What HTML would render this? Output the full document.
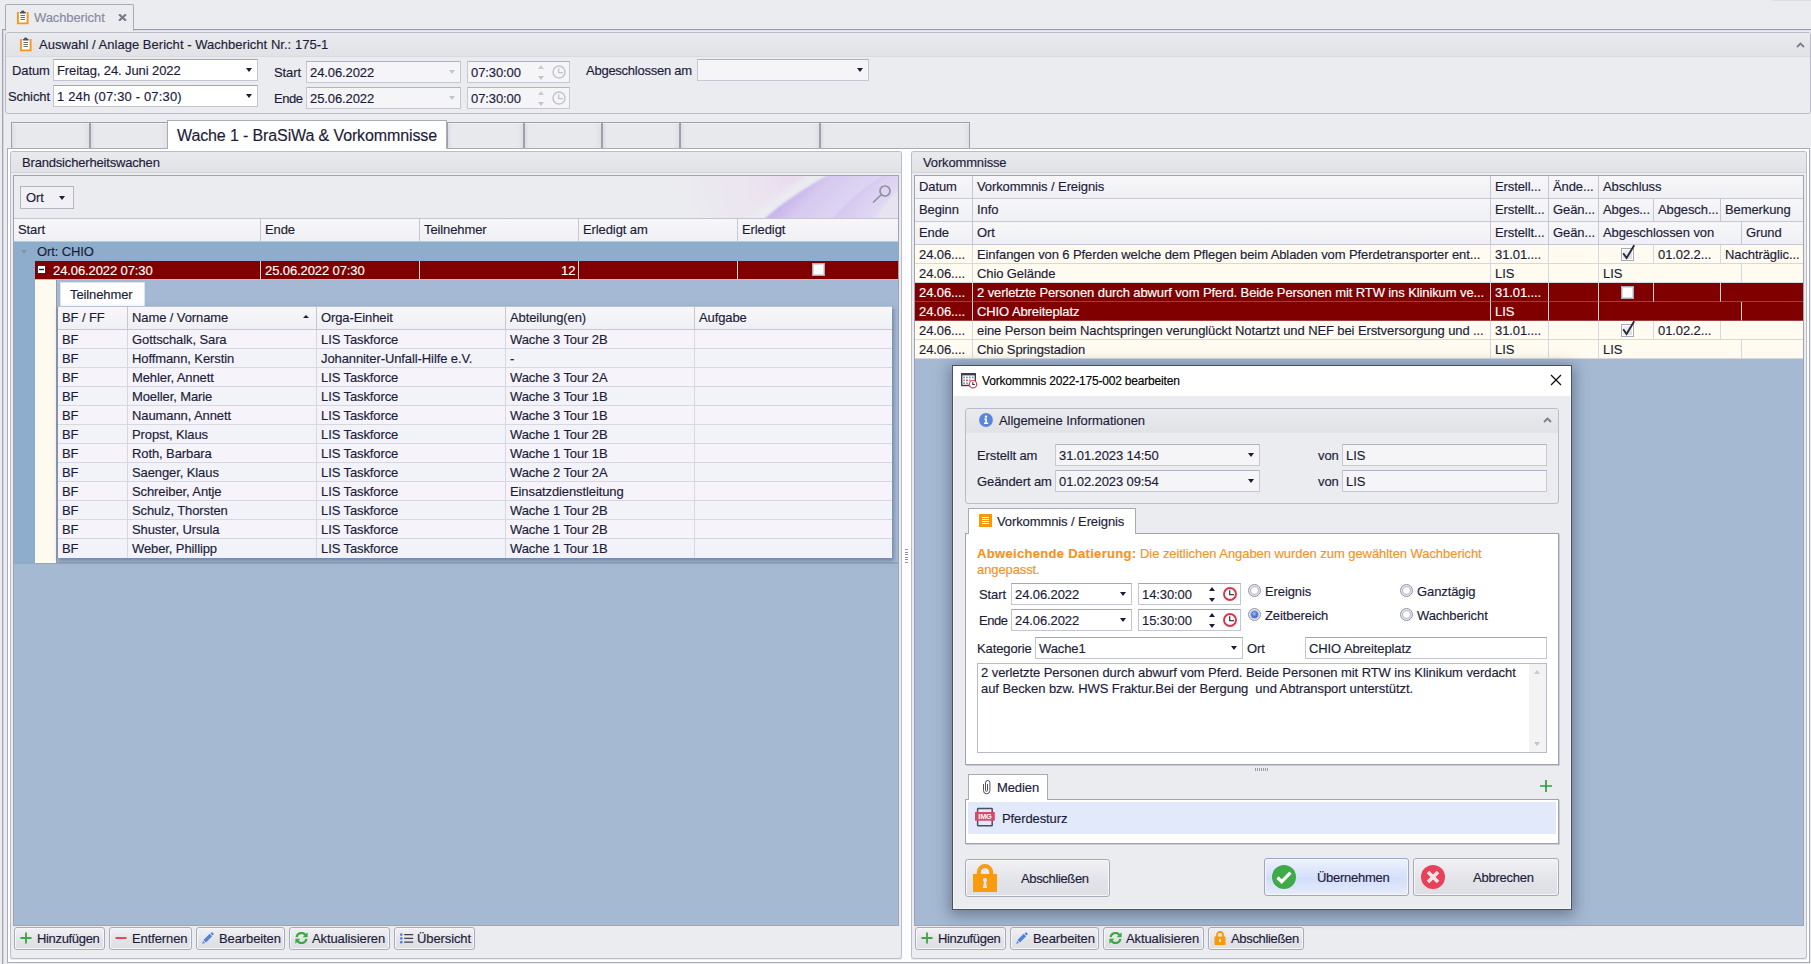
<!DOCTYPE html><html lang="de"><head><meta charset="utf-8"><title>Wachbericht</title><style>
*{box-sizing:border-box;margin:0;padding:0}
html,body{width:1811px;height:964px;overflow:hidden}
body{-webkit-text-stroke:0.15px;letter-spacing:-0.1px;background:#ebecf0;font-family:"Liberation Sans",sans-serif;font-size:13px;color:#1c1c38;position:relative;line-height:16px}
.a{position:absolute}
.t{position:absolute;white-space:nowrap;line-height:16px}
.inp{position:absolute;border:1px solid #c3c5d1;background:#fff;border-top-color:#a3a6b6}
.inp.dis{background:#f5f5f8;border-color:#c6c8d3;border-top-color:#b0b2c0}
.inp .v{position:absolute;left:3px;top:3px;white-space:nowrap}
.dd{position:absolute;width:0;height:0;border-left:3.5px solid transparent;border-right:3.5px solid transparent;border-top:4px solid #1c1c38}
.dd.g{border-top-color:#c3c4cc}
.up{position:absolute;width:0;height:0;border-left:3.5px solid transparent;border-right:3.5px solid transparent;border-bottom:4px solid #1c1c38}
.up.g{border-bottom-color:#c9cad2}
.gh{position:absolute;background:linear-gradient(#e9eaee,#e1e2e6);}
.gb{position:absolute;border:1px solid #babcc8;border-radius:3px}
.btn{position:absolute;border:1px solid #a9abb9;border-radius:3px;background:linear-gradient(#f1f1f5,#e2e3e8 60%,#dedfe5);box-shadow:inset 0 0 0 1px #f6f6f9}
.hc{position:absolute;background:linear-gradient(#f7f7f9,#eff0f4);border-right:1px solid #c6c7d2;border-bottom:1px solid #c6c7d2;white-space:nowrap;overflow:hidden}
.hc span{position:absolute;left:4px}
.c{position:absolute;white-space:nowrap;overflow:hidden;border-right:1px solid #d6d7e0;border-bottom:1px solid #d6d7e0;padding-left:4px;line-height:20px}
.sel .c, .c.sel{background:#800000;color:#fff;border-color:#e8e0e0 #c8b0b0}
</style></head><body>
<div class="a" style="left:2px;top:29px;width:1809px;height:1px;background:#9a9cab"></div>
<div class="a" style="left:2px;top:30px;width:1809px;height:1px;background:#dfe0e7"></div>
<div class="a" style="left:1772px;top:0px;width:39px;height:1px;background:#dcdde2"></div>
<div class="a" style="left:2px;top:30px;width:1px;height:934px;background:#a1a3b0"></div>
<div class="a" style="left:3px;top:31px;width:1px;height:933px;background:#d4d5dd"></div>
<div class="a" style="left:5px;top:4px;width:129px;height:27px;border:1px solid #a9abb8;border-bottom:none;background:#ebecf0;border-radius:2px 2px 0 0"></div>
<svg class="a" style="left:16px;top:10px" width="14" height="15" viewBox="0 0 14 15"><path d="M1.9 2V13.4H11.6V2" fill="#fff" stroke="#f7941d" stroke-width="1.9"/><path d="M3.8 3.4V1.9H4.9A1.9 1.7 0 0 1 8.6 1.9H9.7V3.4z" fill="#4a4e5a"/><path d="M4.5 5.5h4.5M4.5 7.5h4.5M4.5 9.5h4.5" stroke="#6b6f7c" stroke-width="1"/></svg>
<div class="t" style="left:34px;top:10px;color:#868ba2">Wachbericht</div>
<svg class="a" style="left:118px;top:14px" width="9" height="7" viewBox="0 0 9 7"><path d="M1 .3l7 6.4M8 .3l-7 6.4" stroke="#777a8a" stroke-width="2.2"/></svg>
<div class="gb" style="left:5px;top:32px;width:1806px;height:82px;"></div>
<div class="gh" style="left:6px;top:33px;width:1804px;height:24px;border-bottom:1px solid #d9dae0;border-radius:2px 2px 0 0"></div>
<svg class="a" style="left:19px;top:37px" width="14" height="15" viewBox="0 0 14 15"><path d="M1.9 2V13.4H11.6V2" fill="#fff" stroke="#f7941d" stroke-width="1.9"/><path d="M3.8 3.4V1.9H4.9A1.9 1.7 0 0 1 8.6 1.9H9.7V3.4z" fill="#4a4e5a"/><path d="M4.5 5.5h4.5M4.5 7.5h4.5M4.5 9.5h4.5" stroke="#6b6f7c" stroke-width="1"/></svg>
<div class="t" style="left:39px;top:37px;letter-spacing:0.03px">Auswahl / Anlage Bericht - Wachbericht Nr.: 175-1</div>
<svg class="a" style="left:1796px;top:42px" width="9" height="6" viewBox="0 0 9 6"><path d="M1 5l3.5-3.5L8 5" fill="none" stroke="#7a7d8c" stroke-width="1.8"/></svg>
<div class="t" style="left:12px;top:63px;">Datum</div>
<div class="inp" style="left:53px;top:59px;width:205px;height:22px"><span class="v">Freitag, 24. Juni 2022</span><i class="dd" style="right:5px;top:8px"></i></div>
<div class="t" style="left:8px;top:89px;">Schicht</div>
<div class="inp" style="left:53px;top:85px;width:205px;height:22px"><span class="v" style="letter-spacing:.16px">1 24h (07:30 - 07:30)</span><i class="dd" style="right:5px;top:8px"></i></div>
<div class="t" style="left:274px;top:65px;">Start</div>
<div class="inp dis" style="left:306px;top:61px;width:155px;height:22px"><span class="v">24.06.2022</span><i class="dd g" style="right:5px;top:8px"></i></div>
<div class="t" style="left:274px;top:91px;letter-spacing:-0.5px">Ende</div>
<div class="inp dis" style="left:306px;top:87px;width:155px;height:22px"><span class="v">25.06.2022</span><i class="dd g" style="right:5px;top:8px"></i></div>
<div class="inp dis" style="left:467px;top:61px;width:103px;height:22px"><span class="v">07:30:00</span></div>
<i class="up g" style="left:538px;top:65px"></i><i class="dd g" style="left:538px;top:76px"></i>
<svg class="a" style="left:552px;top:65px" width="14" height="14" viewBox="0 0 14 14"><circle cx="7" cy="7" r="6" fill="none" stroke="#c3c4cc" stroke-width="1.5"/><path d="M6.7 3.2V7.6H11" fill="none" stroke="#c3c4cc" stroke-width="1.3"/></svg>
<div class="inp dis" style="left:467px;top:87px;width:103px;height:22px"><span class="v">07:30:00</span></div>
<i class="up g" style="left:538px;top:91px"></i><i class="dd g" style="left:538px;top:102px"></i>
<svg class="a" style="left:552px;top:91px" width="14" height="14" viewBox="0 0 14 14"><circle cx="7" cy="7" r="6" fill="none" stroke="#c3c4cc" stroke-width="1.5"/><path d="M6.7 3.2V7.6H11" fill="none" stroke="#c3c4cc" stroke-width="1.3"/></svg>
<div class="t" style="left:586px;top:63px;letter-spacing:-0.25px">Abgeschlossen am</div>
<div class="inp dis" style="left:697px;top:59px;width:172px;height:22px"><span class="v"></span><i class="dd" style="right:5px;top:8px"></i></div>
<div class="a" style="left:7px;top:148px;width:1803px;height:1px;background:#a9abb8"></div>
<div class="a" style="left:8px;top:149px;width:1801px;height:2px;background:#fff"></div>
<div class="a" style="left:7px;top:148px;width:1px;height:814px;background:#a9abb8"></div>
<div class="a" style="left:8px;top:149px;width:2px;height:812px;background:#fff"></div>
<div class="a" style="left:1809px;top:148px;width:1px;height:815px;background:#a9abb8"></div>
<div class="a" style="left:1807px;top:149px;width:2px;height:812px;background:#fff"></div>
<div class="a" style="left:7px;top:962px;width:1803px;height:1px;background:#a9abb8"></div>
<div class="a" style="left:8px;top:960px;width:1801px;height:2px;background:#fff"></div>
<div class="a" style="left:11px;top:122px;width:79px;height:26px;border:1px solid #9d9fae;border-bottom:none;background:linear-gradient(90deg,#dcdde3 0,#e8e9ed 4px,#e8e9ed calc(100% - 6px),#dfe0e6 100%);box-shadow:inset 0 1px 0 #f1f1f5"></div>
<div class="a" style="left:90px;top:122px;width:79px;height:26px;border:1px solid #9d9fae;border-bottom:none;background:linear-gradient(90deg,#dcdde3 0,#e8e9ed 4px,#e8e9ed calc(100% - 6px),#dfe0e6 100%);box-shadow:inset 0 1px 0 #f1f1f5"></div>
<div class="a" style="left:447px;top:122px;width:77px;height:26px;border:1px solid #9d9fae;border-bottom:none;background:linear-gradient(90deg,#dcdde3 0,#e8e9ed 4px,#e8e9ed calc(100% - 6px),#dfe0e6 100%);box-shadow:inset 0 1px 0 #f1f1f5"></div>
<div class="a" style="left:524px;top:122px;width:78px;height:26px;border:1px solid #9d9fae;border-bottom:none;background:linear-gradient(90deg,#dcdde3 0,#e8e9ed 4px,#e8e9ed calc(100% - 6px),#dfe0e6 100%);box-shadow:inset 0 1px 0 #f1f1f5"></div>
<div class="a" style="left:602px;top:122px;width:78px;height:26px;border:1px solid #9d9fae;border-bottom:none;background:linear-gradient(90deg,#dcdde3 0,#e8e9ed 4px,#e8e9ed calc(100% - 6px),#dfe0e6 100%);box-shadow:inset 0 1px 0 #f1f1f5"></div>
<div class="a" style="left:680px;top:122px;width:140px;height:26px;border:1px solid #9d9fae;border-bottom:none;background:linear-gradient(90deg,#dcdde3 0,#e8e9ed 4px,#e8e9ed calc(100% - 6px),#dfe0e6 100%);box-shadow:inset 0 1px 0 #f1f1f5"></div>
<div class="a" style="left:820px;top:122px;width:150px;height:26px;border:1px solid #9d9fae;border-bottom:none;background:linear-gradient(90deg,#dcdde3 0,#e8e9ed 4px,#e8e9ed calc(100% - 6px),#dfe0e6 100%);box-shadow:inset 0 1px 0 #f1f1f5"></div>
<div class="a" style="left:167px;top:120px;width:280px;height:28px;border:1px solid #a9abb8;border-bottom:none;background:#fff"></div>
<div class="a" style="left:168px;top:148px;width:278px;height:2px;background:#fff"></div>
<div class="t" style="left:177px;top:126px;font-size:16px;line-height:20px;letter-spacing:-0.12px">Wache 1 - BraSiWa &amp; Vorkommnisse</div>
<div class="gb" style="left:10px;top:151px;width:892px;height:808px;background:#ebecf0"></div>
<div class="gh" style="left:11px;top:152px;width:890px;height:21px;border-bottom:1px solid #d3d4dc;border-radius:2px 2px 0 0"></div>
<div class="t" style="left:22px;top:155px;letter-spacing:-0.18px">Brandsicherheitswachen</div>
<div class="a" style="left:13px;top:175px;width:886px;height:751px;border:1px solid #a1a3b2;background:#a5b9d3"></div>
<div class="a" style="left:14px;top:176px;width:884px;height:42px;background:#ebecf0;overflow:hidden">
<svg width="884" height="42" viewBox="0 0 884 42" style="position:absolute;left:0;top:0">
<defs>
<linearGradient id="pk" gradientUnits="userSpaceOnUse" x1="668" y1="40" x2="790" y2="2"><stop offset="0" stop-color="#ecd9f0" stop-opacity="0"/><stop offset=".6" stop-color="#ecdaf0" stop-opacity=".4"/><stop offset="1" stop-color="#ead4ef" stop-opacity=".9"/></linearGradient>
<linearGradient id="l1" gradientUnits="userSpaceOnUse" x1="790" y1="8" x2="826" y2="44"><stop offset="0" stop-color="#c8b5eb"/><stop offset=".3" stop-color="#d6caf0"/><stop offset="1" stop-color="#dfd6f3"/></linearGradient>
<linearGradient id="l2" gradientUnits="userSpaceOnUse" x1="836" y1="14" x2="866" y2="40"><stop offset="0" stop-color="#d3c5ef"/><stop offset="1" stop-color="#e3dbf4"/></linearGradient>
<filter id="bl" x="-5%" y="-20%" width="110%" height="140%"><feGaussianBlur stdDeviation="1.1"/></filter>
<filter id="bl2" x="-5%" y="-20%" width="110%" height="140%"><feGaussianBlur stdDeviation="3"/></filter>
</defs>
<path d="M640 -4 L796 -4 L728 46 L640 46 Z" fill="url(#pk)" filter="url(#bl2)"/>
<g filter="url(#bl)">
<path d="M749 44 C768 27 790 12 816 -2 L874 -2 C852 11 834 26 818 44 Z" fill="url(#l1)"/>
<path d="M818 44 C834 26 852 11 874 -2 L888 -2 L888 12 C876 22 868 32 862 44 Z" fill="url(#l2)"/>
<path d="M862 44 C868 32 876 22 888 12 L888 44 Z" fill="#e7e4ef"/>
<path d="M818 44 C834 26 852 11 874 -2" fill="none" stroke="#c9b9ec" stroke-width="1"/>
</g>
</svg></div>
<div class="a" style="left:14px;top:218px;width:884px;height:1px;background:#c3c4d0"></div>
<div class="a" style="left:20px;top:186px;width:54px;height:23px;border:1px solid #b4b5c2;background:#f1f1f5"></div>
<div class="t" style="left:26px;top:190px;">Ort</div>
<i class="dd" style="left:59px;top:196px"></i>
<svg class="a" style="left:870px;top:183px" width="24" height="24" viewBox="0 0 24 24"><circle cx="15" cy="8" r="5" fill="none" stroke="#8e909c" stroke-width="1.7"/><path d="M11.5 11.5L3 19.5" stroke="#8e909c" stroke-width="1.7"/></svg>
<div class="hc" style="left:14px;top:219px;width:247px;height:23px;"><span style="top:3px">Start</span></div>
<div class="hc" style="left:261px;top:219px;width:159px;height:23px;"><span style="top:3px">Ende</span></div>
<div class="hc" style="left:420px;top:219px;width:159px;height:23px;"><span style="top:3px">Teilnehmer</span></div>
<div class="hc" style="left:579px;top:219px;width:159px;height:23px;"><span style="top:3px">Erledigt am</span></div>
<div class="hc" style="left:738px;top:219px;width:160px;height:23px;border-right:none"><span style="top:3px">Erledigt</span></div>
<div class="a" style="left:14px;top:242px;width:884px;height:19px;background:#8eadcc"></div>
<i class="dd" style="left:21px;top:250px;border-top-color:#8b8fa0;border-top-width:4.5px"></i>
<div class="t" style="left:37px;top:244px;">Ort: CHIO</div>
<div class="a" style="left:35px;top:261px;width:863px;height:18px;background:#800000"></div>
<div class="a" style="left:260px;top:261px;width:1px;height:18px;background:#e6dada"></div>
<div class="a" style="left:419px;top:261px;width:1px;height:18px;background:#e6dada"></div>
<div class="a" style="left:578px;top:261px;width:1px;height:18px;background:#e6dada"></div>
<div class="a" style="left:737px;top:261px;width:1px;height:18px;background:#e6dada"></div>
<div class="a" style="left:14px;top:279px;width:884px;height:1px;background:#b5c4d9"></div>
<svg class="a" style="left:37px;top:265px" width="9" height="9" viewBox="0 0 9 9"><rect x=".5" y=".5" width="8" height="8" fill="#fff" stroke="#2b2b48"/><path d="M2 4.5h5" stroke="#222" stroke-width="1.4"/></svg>
<div class="t" style="left:53px;top:263px;color:#fff">24.06.2022 07:30</div>
<div class="t" style="left:265px;top:263px;color:#fff">25.06.2022 07:30</div>
<div class="t" style="left:561px;top:263px;color:#fff">12</div>
<div class="a" style="left:812px;top:263px;width:13px;height:13px;background:#fff;border:2px solid #d9dbe3;outline:1px solid #a9abb8;outline-offset:-1px"></div>
<div class="a" style="left:14px;top:261px;width:21px;height:302px;background:#8eadcc"></div>
<div class="a" style="left:35px;top:280px;width:21px;height:283px;background:#fffaf0"></div>
<div class="a" style="left:56px;top:280px;width:842px;height:283px;background:#a5b9d5;border-left:1px solid #8e9bb3;border-bottom:1px solid #93a1b8"></div>
<div class="a" style="left:14px;top:563px;width:884px;height:1px;background:#98a6bd"></div>
<div class="a" style="left:60px;top:282px;width:85px;height:25px;background:#fff;border:1px solid #dfe3ec;border-bottom:none"></div>
<div class="t" style="left:70px;top:287px;">Teilnehmer</div>
<div class="a" style="left:58px;top:307px;width:834px;height:251px;background:#f4f3fa;box-shadow:-1px 0 0 #8592ad,0 -1px 0 #b9c3d6,1px 2px 4px 1px rgba(70,85,120,.5)"></div>
<div class="hc" style="left:58px;top:307px;width:70px;height:23px;"><span style="top:3px">BF / FF</span></div>
<div class="hc" style="left:128px;top:307px;width:189px;height:23px;"><span style="top:3px">Name / Vorname</span></div>
<div class="hc" style="left:317px;top:307px;width:189px;height:23px;"><span style="top:3px">Orga-Einheit</span></div>
<div class="hc" style="left:506px;top:307px;width:189px;height:23px;"><span style="top:3px">Abteilung(en)</span></div>
<div class="hc" style="left:695px;top:307px;width:197px;height:23px;border-right:none"><span style="top:3px">Aufgabe</span></div>
<i class="up" style="left:303px;top:315px;border-left-width:3px;border-right-width:3px;border-bottom-width:3.5px"></i>
<div class="c" style="left:58px;top:330px;width:70px;height:19px;background:#f6f3fb;">BF</div>
<div class="c" style="left:128px;top:330px;width:189px;height:19px;background:#f6f3fb;">Gottschalk, Sara</div>
<div class="c" style="left:317px;top:330px;width:189px;height:19px;background:#f6f3fb;">LIS Taskforce</div>
<div class="c" style="left:506px;top:330px;width:189px;height:19px;background:#f6f3fb;">Wache 3 Tour 2B</div>
<div class="c" style="left:695px;top:330px;width:197px;height:19px;background:#f6f3fb;border-right:none;"></div>
<div class="c" style="left:58px;top:349px;width:70px;height:19px;background:#f1f3f9;">BF</div>
<div class="c" style="left:128px;top:349px;width:189px;height:19px;background:#f1f3f9;">Hoffmann, Kerstin</div>
<div class="c" style="left:317px;top:349px;width:189px;height:19px;background:#f1f3f9;">Johanniter-Unfall-Hilfe e.V.</div>
<div class="c" style="left:506px;top:349px;width:189px;height:19px;background:#f1f3f9;">-</div>
<div class="c" style="left:695px;top:349px;width:197px;height:19px;background:#f1f3f9;border-right:none;"></div>
<div class="c" style="left:58px;top:368px;width:70px;height:19px;background:#f6f3fb;">BF</div>
<div class="c" style="left:128px;top:368px;width:189px;height:19px;background:#f6f3fb;">Mehler, Annett</div>
<div class="c" style="left:317px;top:368px;width:189px;height:19px;background:#f6f3fb;">LIS Taskforce</div>
<div class="c" style="left:506px;top:368px;width:189px;height:19px;background:#f6f3fb;">Wache 3 Tour 2A</div>
<div class="c" style="left:695px;top:368px;width:197px;height:19px;background:#f6f3fb;border-right:none;"></div>
<div class="c" style="left:58px;top:387px;width:70px;height:19px;background:#f1f3f9;">BF</div>
<div class="c" style="left:128px;top:387px;width:189px;height:19px;background:#f1f3f9;">Moeller, Marie</div>
<div class="c" style="left:317px;top:387px;width:189px;height:19px;background:#f1f3f9;">LIS Taskforce</div>
<div class="c" style="left:506px;top:387px;width:189px;height:19px;background:#f1f3f9;">Wache 3 Tour 1B</div>
<div class="c" style="left:695px;top:387px;width:197px;height:19px;background:#f1f3f9;border-right:none;"></div>
<div class="c" style="left:58px;top:406px;width:70px;height:19px;background:#f6f3fb;">BF</div>
<div class="c" style="left:128px;top:406px;width:189px;height:19px;background:#f6f3fb;">Naumann, Annett</div>
<div class="c" style="left:317px;top:406px;width:189px;height:19px;background:#f6f3fb;">LIS Taskforce</div>
<div class="c" style="left:506px;top:406px;width:189px;height:19px;background:#f6f3fb;">Wache 3 Tour 1B</div>
<div class="c" style="left:695px;top:406px;width:197px;height:19px;background:#f6f3fb;border-right:none;"></div>
<div class="c" style="left:58px;top:425px;width:70px;height:19px;background:#f1f3f9;">BF</div>
<div class="c" style="left:128px;top:425px;width:189px;height:19px;background:#f1f3f9;">Propst, Klaus</div>
<div class="c" style="left:317px;top:425px;width:189px;height:19px;background:#f1f3f9;">LIS Taskforce</div>
<div class="c" style="left:506px;top:425px;width:189px;height:19px;background:#f1f3f9;">Wache 1 Tour 2B</div>
<div class="c" style="left:695px;top:425px;width:197px;height:19px;background:#f1f3f9;border-right:none;"></div>
<div class="c" style="left:58px;top:444px;width:70px;height:19px;background:#f6f3fb;">BF</div>
<div class="c" style="left:128px;top:444px;width:189px;height:19px;background:#f6f3fb;">Roth, Barbara</div>
<div class="c" style="left:317px;top:444px;width:189px;height:19px;background:#f6f3fb;">LIS Taskforce</div>
<div class="c" style="left:506px;top:444px;width:189px;height:19px;background:#f6f3fb;">Wache 1 Tour 1B</div>
<div class="c" style="left:695px;top:444px;width:197px;height:19px;background:#f6f3fb;border-right:none;"></div>
<div class="c" style="left:58px;top:463px;width:70px;height:19px;background:#f1f3f9;">BF</div>
<div class="c" style="left:128px;top:463px;width:189px;height:19px;background:#f1f3f9;">Saenger, Klaus</div>
<div class="c" style="left:317px;top:463px;width:189px;height:19px;background:#f1f3f9;">LIS Taskforce</div>
<div class="c" style="left:506px;top:463px;width:189px;height:19px;background:#f1f3f9;">Wache 2 Tour 2A</div>
<div class="c" style="left:695px;top:463px;width:197px;height:19px;background:#f1f3f9;border-right:none;"></div>
<div class="c" style="left:58px;top:482px;width:70px;height:19px;background:#f6f3fb;">BF</div>
<div class="c" style="left:128px;top:482px;width:189px;height:19px;background:#f6f3fb;">Schreiber, Antje</div>
<div class="c" style="left:317px;top:482px;width:189px;height:19px;background:#f6f3fb;">LIS Taskforce</div>
<div class="c" style="left:506px;top:482px;width:189px;height:19px;background:#f6f3fb;">Einsatzdienstleitung</div>
<div class="c" style="left:695px;top:482px;width:197px;height:19px;background:#f6f3fb;border-right:none;"></div>
<div class="c" style="left:58px;top:501px;width:70px;height:19px;background:#f1f3f9;">BF</div>
<div class="c" style="left:128px;top:501px;width:189px;height:19px;background:#f1f3f9;">Schulz, Thorsten</div>
<div class="c" style="left:317px;top:501px;width:189px;height:19px;background:#f1f3f9;">LIS Taskforce</div>
<div class="c" style="left:506px;top:501px;width:189px;height:19px;background:#f1f3f9;">Wache 1 Tour 2B</div>
<div class="c" style="left:695px;top:501px;width:197px;height:19px;background:#f1f3f9;border-right:none;"></div>
<div class="c" style="left:58px;top:520px;width:70px;height:19px;background:#f6f3fb;">BF</div>
<div class="c" style="left:128px;top:520px;width:189px;height:19px;background:#f6f3fb;">Shuster, Ursula</div>
<div class="c" style="left:317px;top:520px;width:189px;height:19px;background:#f6f3fb;">LIS Taskforce</div>
<div class="c" style="left:506px;top:520px;width:189px;height:19px;background:#f6f3fb;">Wache 1 Tour 2B</div>
<div class="c" style="left:695px;top:520px;width:197px;height:19px;background:#f6f3fb;border-right:none;"></div>
<div class="c" style="left:58px;top:539px;width:70px;height:19px;background:#f1f3f9;border-bottom:none;">BF</div>
<div class="c" style="left:128px;top:539px;width:189px;height:19px;background:#f1f3f9;border-bottom:none;">Weber, Phillipp</div>
<div class="c" style="left:317px;top:539px;width:189px;height:19px;background:#f1f3f9;border-bottom:none;">LIS Taskforce</div>
<div class="c" style="left:506px;top:539px;width:189px;height:19px;background:#f1f3f9;border-bottom:none;">Wache 1 Tour 1B</div>
<div class="c" style="left:695px;top:539px;width:197px;height:19px;background:#f1f3f9;border-right:none;border-bottom:none;"></div>
<div class="a" style="left:902px;top:151px;width:9px;height:809px;background:#fdfdfe"></div>
<div class="a" style="left:905px;top:549px;width:3px;height:1px;background:#8e909f"></div>
<div class="a" style="left:905px;top:552px;width:3px;height:1px;background:#8e909f"></div>
<div class="a" style="left:905px;top:554px;width:3px;height:1px;background:#8e909f"></div>
<div class="a" style="left:905px;top:557px;width:3px;height:1px;background:#8e909f"></div>
<div class="a" style="left:905px;top:559px;width:3px;height:1px;background:#8e909f"></div>
<div class="a" style="left:905px;top:562px;width:3px;height:1px;background:#8e909f"></div>
<div class="gb" style="left:911px;top:151px;width:896px;height:808px;background:#ebecf0"></div>
<div class="gh" style="left:912px;top:152px;width:894px;height:21px;border-bottom:1px solid #d3d4dc;border-radius:2px 2px 0 0"></div>
<div class="t" style="left:923px;top:155px;letter-spacing:-0.15px">Vorkommnisse</div>
<div class="a" style="left:914px;top:175px;width:890px;height:751px;border:1px solid #a1a3b2;background:#a5b9d3"></div>
<div class="hc" style="left:915px;top:176px;width:58px;height:23px;"><span style="top:3px;left:4px">Datum</span></div>
<div class="hc" style="left:973px;top:176px;width:518px;height:23px;"><span style="top:3px;left:4px">Vorkommnis / Ereignis</span></div>
<div class="hc" style="left:1491px;top:176px;width:58px;height:23px;"><span style="top:3px;left:4px">Erstell...</span></div>
<div class="hc" style="left:1549px;top:176px;width:50px;height:23px;"><span style="top:3px;left:4px">Ände...</span></div>
<div class="hc" style="left:1599px;top:176px;width:204px;height:23px;border-right:none"><span style="top:3px;left:4px">Abschluss</span></div>
<div class="hc" style="left:915px;top:199px;width:58px;height:23px;"><span style="top:3px;left:4px">Beginn</span></div>
<div class="hc" style="left:973px;top:199px;width:518px;height:23px;"><span style="top:3px;left:4px">Info</span></div>
<div class="hc" style="left:1491px;top:199px;width:58px;height:23px;"><span style="top:3px;left:4px">Erstellt...</span></div>
<div class="hc" style="left:1549px;top:199px;width:50px;height:23px;"><span style="top:3px;left:4px">Geän...</span></div>
<div class="hc" style="left:1599px;top:199px;width:55px;height:23px;"><span style="top:3px;left:4px">Abges...</span></div>
<div class="hc" style="left:1654px;top:199px;width:67px;height:23px;"><span style="top:3px;left:4px">Abgesch...</span></div>
<div class="hc" style="left:1721px;top:199px;width:82px;height:23px;border-right:none"><span style="top:3px;left:4px">Bemerkung</span></div>
<div class="hc" style="left:915px;top:222px;width:58px;height:23px;"><span style="top:3px;left:4px">Ende</span></div>
<div class="hc" style="left:973px;top:222px;width:518px;height:23px;"><span style="top:3px;left:4px">Ort</span></div>
<div class="hc" style="left:1491px;top:222px;width:58px;height:23px;"><span style="top:3px;left:4px">Erstellt...</span></div>
<div class="hc" style="left:1549px;top:222px;width:50px;height:23px;"><span style="top:3px;left:4px">Geän...</span></div>
<div class="hc" style="left:1599px;top:222px;width:143px;height:23px;"><span style="top:3px;left:4px">Abgeschlossen von</span></div>
<div class="hc" style="left:1742px;top:222px;width:61px;height:23px;border-right:none"><span style="top:3px;left:4px">Grund</span></div>
<div class="c" style="left:915px;top:245px;width:58px;height:19px;background:#fffbf0;">24.06....</div>
<div class="c" style="left:973px;top:245px;width:518px;height:19px;background:#fffbf0;">Einfangen von 6 Pferden welche dem Pflegen beim Abladen vom Pferdetransporter ent...</div>
<div class="c" style="left:1491px;top:245px;width:58px;height:19px;background:#fffbf0;">31.01....</div>
<div class="c" style="left:1549px;top:245px;width:50px;height:19px;background:#fffbf0;"></div>
<div class="c" style="left:1599px;top:245px;width:55px;height:19px;background:#fffbf0;"></div>
<div class="c" style="left:1654px;top:245px;width:67px;height:19px;background:#fffbf0;">01.02.2...</div>
<div class="c" style="left:1721px;top:245px;width:82px;height:19px;background:#fffbf0;border-right:none;">Nachträglic...</div>
<div class="a" style="left:1621px;top:248px;width:13px;height:13px;background:linear-gradient(135deg,#f4f4f7,#dcdde4);border:1px solid #a9abb8;box-shadow:inset 0 0 0 1px #fff"></div>
<svg class="a" style="left:1621px;top:244px" width="16" height="17" viewBox="0 0 16 17"><path d="M2.2 9.2L5.6 14 13.2 1.2" fill="none" stroke="#2a2a3a" stroke-width="1.9"/></svg>
<div class="c" style="left:915px;top:264px;width:58px;height:19px;background:#fffbf0;">24.06....</div>
<div class="c" style="left:973px;top:264px;width:518px;height:19px;background:#fffbf0;">Chio Gelände</div>
<div class="c" style="left:1491px;top:264px;width:58px;height:19px;background:#fffbf0;">LIS</div>
<div class="c" style="left:1549px;top:264px;width:50px;height:19px;background:#fffbf0;"></div>
<div class="c" style="left:1599px;top:264px;width:143px;height:19px;background:#fffbf0;">LIS</div>
<div class="c" style="left:1742px;top:264px;width:61px;height:19px;background:#fffbf0;border-right:none;"></div>
<div class="c" style="left:915px;top:283px;width:58px;height:19px;background:#800000;color:#fff;border-color:#e0d4d4;border-bottom-color:#9a4040;">24.06....</div>
<div class="c" style="left:973px;top:283px;width:518px;height:19px;background:#800000;color:#fff;border-color:#e0d4d4;border-bottom-color:#9a4040;">2 verletzte Personen durch abwurf vom Pferd. Beide Personen mit RTW ins Klinikum ve...</div>
<div class="c" style="left:1491px;top:283px;width:58px;height:19px;background:#800000;color:#fff;border-color:#e0d4d4;border-bottom-color:#9a4040;">31.01....</div>
<div class="c" style="left:1549px;top:283px;width:50px;height:19px;background:#800000;color:#fff;border-color:#e0d4d4;border-bottom-color:#9a4040;"></div>
<div class="c" style="left:1599px;top:283px;width:55px;height:19px;background:#800000;color:#fff;border-color:#e0d4d4;border-bottom-color:#9a4040;"></div>
<div class="c" style="left:1654px;top:283px;width:67px;height:19px;background:#800000;color:#fff;border-color:#e0d4d4;border-bottom-color:#9a4040;"></div>
<div class="c" style="left:1721px;top:283px;width:82px;height:19px;background:#800000;border-right:none;color:#fff;border-color:#e0d4d4;border-bottom-color:#9a4040;"></div>
<div class="a" style="left:1621px;top:286px;width:13px;height:13px;background:#fff;border:2px solid #d9dbe3;outline:1px solid #a9abb8;outline-offset:-1px"></div>
<div class="c" style="left:915px;top:302px;width:58px;height:19px;background:#800000;color:#fff;border-color:#e0d4d4;border-bottom-color:#9a4040;">24.06....</div>
<div class="c" style="left:973px;top:302px;width:518px;height:19px;background:#800000;color:#fff;border-color:#e0d4d4;border-bottom-color:#9a4040;">CHIO Abreiteplatz</div>
<div class="c" style="left:1491px;top:302px;width:58px;height:19px;background:#800000;color:#fff;border-color:#e0d4d4;border-bottom-color:#9a4040;">LIS</div>
<div class="c" style="left:1549px;top:302px;width:50px;height:19px;background:#800000;color:#fff;border-color:#e0d4d4;border-bottom-color:#9a4040;"></div>
<div class="c" style="left:1599px;top:302px;width:143px;height:19px;background:#800000;color:#fff;border-color:#e0d4d4;border-bottom-color:#9a4040;"></div>
<div class="c" style="left:1742px;top:302px;width:61px;height:19px;background:#800000;border-right:none;color:#fff;border-color:#e0d4d4;border-bottom-color:#9a4040;"></div>
<div class="c" style="left:915px;top:321px;width:58px;height:19px;background:#fffbf0;">24.06....</div>
<div class="c" style="left:973px;top:321px;width:518px;height:19px;background:#fffbf0;">eine Person beim Nachtspringen verunglückt Notartzt und NEF bei Erstversorgung und ...</div>
<div class="c" style="left:1491px;top:321px;width:58px;height:19px;background:#fffbf0;">31.01....</div>
<div class="c" style="left:1549px;top:321px;width:50px;height:19px;background:#fffbf0;"></div>
<div class="c" style="left:1599px;top:321px;width:55px;height:19px;background:#fffbf0;"></div>
<div class="c" style="left:1654px;top:321px;width:67px;height:19px;background:#fffbf0;">01.02.2...</div>
<div class="c" style="left:1721px;top:321px;width:82px;height:19px;background:#fffbf0;border-right:none;"></div>
<div class="a" style="left:1621px;top:324px;width:13px;height:13px;background:linear-gradient(135deg,#f4f4f7,#dcdde4);border:1px solid #a9abb8;box-shadow:inset 0 0 0 1px #fff"></div>
<svg class="a" style="left:1621px;top:320px" width="16" height="17" viewBox="0 0 16 17"><path d="M2.2 9.2L5.6 14 13.2 1.2" fill="none" stroke="#2a2a3a" stroke-width="1.9"/></svg>
<div class="c" style="left:915px;top:340px;width:58px;height:19px;background:#fffbf0;">24.06....</div>
<div class="c" style="left:973px;top:340px;width:518px;height:19px;background:#fffbf0;">Chio Springstadion</div>
<div class="c" style="left:1491px;top:340px;width:58px;height:19px;background:#fffbf0;">LIS</div>
<div class="c" style="left:1549px;top:340px;width:50px;height:19px;background:#fffbf0;"></div>
<div class="c" style="left:1599px;top:340px;width:143px;height:19px;background:#fffbf0;">LIS</div>
<div class="c" style="left:1742px;top:340px;width:61px;height:19px;background:#fffbf0;border-right:none;"></div>
<div class="btn" style="left:14px;top:927px;width:91px;height:23px;"><span class="a" style="left:5px;top:4px;line-height:0"><svg width="12" height="12" viewBox="0 0 13 13"><path d="M6.5 .5v12M.5 6.5h12" stroke="#3ea743" stroke-width="2"/></svg></span><span class="t" style="left:22px;top:3px;letter-spacing:-0.33px">Hinzufügen</span></div>
<div class="btn" style="left:109px;top:927px;width:83px;height:23px;"><span class="a" style="left:5px;top:4px;line-height:0"><svg width="12" height="12" viewBox="0 0 13 13"><path d="M.5 6.5h12" stroke="#e8394f" stroke-width="2"/></svg></span><span class="t" style="left:22px;top:3px;">Entfernen</span></div>
<div class="btn" style="left:196px;top:927px;width:89px;height:23px;"><span class="a" style="left:5px;top:4px;line-height:0"><svg width="12" height="12" viewBox="0 0 12 12"><path d="M1.45 8.05L7.65 1.85l2.5 2.5L3.95 10.55z" fill="#4f82dc"/><path d="M8.6 1.4l.9-.9a.7.7 0 0 1 1 0l1 1a.7.7 0 0 1 0 1l-.9.9z" fill="#4f82dc"/><path d="M1.1 9l1.9 1.9-2.8.9z" fill="#4f82dc"/></svg></span><span class="t" style="left:22px;top:3px;">Bearbeiten</span></div>
<div class="btn" style="left:289px;top:927px;width:101px;height:23px;"><span class="a" style="left:5px;top:4px;line-height:0"><svg width="13" height="12" viewBox="0 0 13 12"><path d="M1.6 5.2A4.9 4.9 0 0 1 10.4 3" fill="none" stroke="#3ea743" stroke-width="2.2"/><path d="M12.6 .2v5H7.6z" fill="#3ea743"/><path d="M11.4 6.8A4.9 4.9 0 0 1 2.6 9" fill="none" stroke="#3ea743" stroke-width="2.2"/><path d="M.4 11.8v-5h5z" fill="#3ea743"/></svg></span><span class="t" style="left:22px;top:3px;">Aktualisieren</span></div>
<div class="btn" style="left:394px;top:927px;width:81px;height:23px;"><span class="a" style="left:5px;top:4px;line-height:0"><svg width="14" height="12" viewBox="0 0 14 12"><path d="M4.2 2.6h9M4.2 6.4h9M4.2 10.2h9" stroke="#3f4250" stroke-width="1.2"/><g fill="#4f82dc"><circle cx="1.3" cy="2.6" r="1.35"/><circle cx="1.3" cy="6.4" r="1.35"/><circle cx="1.3" cy="10.2" r="1.35"/></g></svg></span><span class="t" style="left:22px;top:3px;">Übersicht</span></div>
<div class="btn" style="left:915px;top:927px;width:91px;height:23px;"><span class="a" style="left:5px;top:4px;line-height:0"><svg width="12" height="12" viewBox="0 0 13 13"><path d="M6.5 .5v12M.5 6.5h12" stroke="#3ea743" stroke-width="2"/></svg></span><span class="t" style="left:22px;top:3px;letter-spacing:-0.33px">Hinzufügen</span></div>
<div class="btn" style="left:1010px;top:927px;width:89px;height:23px;"><span class="a" style="left:5px;top:4px;line-height:0"><svg width="12" height="12" viewBox="0 0 12 12"><path d="M1.45 8.05L7.65 1.85l2.5 2.5L3.95 10.55z" fill="#4f82dc"/><path d="M8.6 1.4l.9-.9a.7.7 0 0 1 1 0l1 1a.7.7 0 0 1 0 1l-.9.9z" fill="#4f82dc"/><path d="M1.1 9l1.9 1.9-2.8.9z" fill="#4f82dc"/></svg></span><span class="t" style="left:22px;top:3px;">Bearbeiten</span></div>
<div class="btn" style="left:1103px;top:927px;width:101px;height:23px;"><span class="a" style="left:5px;top:4px;line-height:0"><svg width="13" height="12" viewBox="0 0 13 12"><path d="M1.6 5.2A4.9 4.9 0 0 1 10.4 3" fill="none" stroke="#3ea743" stroke-width="2.2"/><path d="M12.6 .2v5H7.6z" fill="#3ea743"/><path d="M11.4 6.8A4.9 4.9 0 0 1 2.6 9" fill="none" stroke="#3ea743" stroke-width="2.2"/><path d="M.4 11.8v-5h5z" fill="#3ea743"/></svg></span><span class="t" style="left:22px;top:3px;">Aktualisieren</span></div>
<div class="btn" style="left:1208px;top:927px;width:96px;height:23px;"><span class="a" style="left:5px;top:3px;line-height:0"><svg width="12" height="14" viewBox="0 0 12 14"><path d="M3 6V4a3 3 0 0 1 6 0v2" fill="none" stroke="#f59a0c" stroke-width="1.8"/><rect x=".5" y="5.5" width="11" height="8.5" fill="#f59a0c"/><path d="M6 8v3" stroke="#fff" stroke-width="1.4"/></svg></span><span class="t" style="left:22px;top:3px;letter-spacing:-0.33px">Abschließen</span></div>
<div class="a" style="left:952px;top:365px;width:620px;height:545px;background:#ebecf0;border:1px solid #4b515d;box-shadow:inset 0 0 0 1px #f6f6f9,0 3px 14px 2px rgba(35,45,65,.45)"></div>
<div class="a" style="left:953px;top:366px;width:618px;height:30px;background:#fff"></div>
<svg class="a" style="left:961px;top:373px" width="17" height="16" viewBox="0 0 17 16"><rect x=".7" y=".7" width="13.6" height="11.8" fill="#fff" stroke="#3d3f4c" stroke-width="1.4"/><rect x="0" y="0" width="15" height="2.4" fill="#3d3f4c"/><g fill="#8d909b"><rect x="2.2" y="3.6" width="1.7" height="1.7"/><rect x="5.1" y="3.6" width="1.7" height="1.7"/><rect x="8" y="3.6" width="1.7" height="1.7"/><rect x="10.9" y="3.6" width="1.7" height="1.7"/><rect x="2.2" y="6.5" width="1.7" height="1.7"/><rect x="8" y="6.5" width="1.7" height="1.7"/><rect x="2.2" y="9.4" width="1.7" height="1.7"/><rect x="5.1" y="9.4" width="1.7" height="1.7"/></g><rect x="5.1" y="6.5" width="1.7" height="1.7" fill="#e8384f"/><circle cx="12" cy="11.2" r="3.7" fill="#fff" stroke="#e8384f" stroke-width="1.2"/><path d="M11.8 9.2v2.3h2" fill="none" stroke="#2b2b3a" stroke-width="1.1"/></svg>
<div class="t" style="left:982px;top:372px;font-size:12px;color:#000;letter-spacing:-0.19px;line-height:18px">Vorkommnis 2022-175-002 bearbeiten</div>
<svg class="a" style="left:1550px;top:374px" width="12" height="12" viewBox="0 0 12 12"><path d="M1 1l10 10M11 1L1 11" stroke="#111" stroke-width="1.3"/></svg>
<div class="gb" style="left:965px;top:408px;width:594px;height:96px;"></div>
<div class="gh" style="left:966px;top:409px;width:592px;height:24px;border-radius:2px 2px 0 0"></div>
<svg class="a" style="left:979px;top:413px" width="14" height="14" viewBox="0 0 15 15"><circle cx="7.5" cy="7.5" r="7.4" fill="#5b86d8"/><circle cx="7.5" cy="3.9" r="1.3" fill="#fff"/><path d="M5.6 6h2.9v4.3h1.3v1.4H5.4v-1.4h1.3V7.3H5.6z" fill="#fff"/></svg>
<div class="t" style="left:999px;top:413px;letter-spacing:-0.06px">Allgemeine Informationen</div>
<svg class="a" style="left:1543px;top:417px" width="9" height="6" viewBox="0 0 9 6"><path d="M1 5l3.5-3.5L8 5" fill="none" stroke="#7a7d8c" stroke-width="1.8"/></svg>
<div class="t" style="left:977px;top:448px;">Erstellt am</div>
<div class="inp dis" style="left:1055px;top:444px;width:205px;height:22px"><span class="v">31.01.2023 14:50</span><i class="dd" style="right:5px;top:8px"></i></div>
<div class="t" style="left:977px;top:474px;">Geändert am</div>
<div class="inp dis" style="left:1055px;top:470px;width:205px;height:22px"><span class="v">01.02.2023 09:54</span><i class="dd" style="right:5px;top:8px"></i></div>
<div class="t" style="left:1318px;top:448px;">von</div>
<div class="inp dis" style="left:1342px;top:444px;width:205px;height:22px"><span class="v">LIS</span></div>
<div class="t" style="left:1318px;top:474px;">von</div>
<div class="inp dis" style="left:1342px;top:470px;width:205px;height:22px"><span class="v">LIS</span></div>
<div class="a" style="left:965px;top:533px;width:594px;height:232px;background:#fff;border:1px solid #a1a3b2;box-shadow:1px 1px 0 #c9cad3"></div>
<div class="a" style="left:968px;top:508px;width:168px;height:26px;background:#fff;border:1px solid #a9abb8;border-bottom:none"></div>
<svg class="a" style="left:979px;top:514px" width="13" height="13" viewBox="0 0 13 13"><rect width="13" height="13" fill="#f59a0c"/><path d="M3 3.5h7M3 5.5h7M3 7.5h7M3 9.5h7" stroke="#fff" stroke-width="1"/></svg>
<div class="t" style="left:997px;top:514px;">Vorkommnis / Ereignis</div>
<div class="t" style="left:977px;top:546px;color:#f7921e;letter-spacing:-0.06px"><b style="letter-spacing:.32px">Abweichende Datierung:</b> Die zeitlichen Angaben wurden zum gewählten Wachbericht</div>
<div class="t" style="left:977px;top:562px;color:#f7921e">angepasst.</div>
<div class="t" style="left:979px;top:587px;">Start</div>
<div class="inp" style="left:1011px;top:583px;width:121px;height:22px"><span class="v">24.06.2022</span><i class="dd" style="right:5px;top:8px"></i></div>
<div class="inp" style="left:1138px;top:583px;width:103px;height:22px"><span class="v">14:30:00</span></div>
<i class="up" style="left:1209px;top:587px"></i><i class="dd" style="left:1209px;top:598px"></i>
<svg class="a" style="left:1223px;top:587px" width="14" height="14" viewBox="0 0 14 14"><circle cx="7" cy="7" r="6" fill="#fff" stroke="#e0314b" stroke-width="1.9"/><path d="M6.7 3.2V7.6H11" fill="none" stroke="#3a3c4c" stroke-width="1.3"/></svg>
<div class="t" style="left:979px;top:613px;letter-spacing:-0.5px">Ende</div>
<div class="inp" style="left:1011px;top:609px;width:121px;height:22px"><span class="v">24.06.2022</span><i class="dd" style="right:5px;top:8px"></i></div>
<div class="inp" style="left:1138px;top:609px;width:103px;height:22px"><span class="v">15:30:00</span></div>
<i class="up" style="left:1209px;top:613px"></i><i class="dd" style="left:1209px;top:624px"></i>
<svg class="a" style="left:1223px;top:613px" width="14" height="14" viewBox="0 0 14 14"><circle cx="7" cy="7" r="6" fill="#fff" stroke="#e0314b" stroke-width="1.9"/><path d="M6.7 3.2V7.6H11" fill="none" stroke="#3a3c4c" stroke-width="1.3"/></svg>
<div class="a" style="left:1248px;top:584px;width:13px;height:13px;border-radius:50%;border:1px solid #9396a8;background:radial-gradient(circle at 50% 50%,#fff 0,#fff 2.9px,#b4b7c6 3.9px,#e6e8ef 4.8px,#e2e4ec 5.5px)"></div>
<div class="t" style="left:1265px;top:584px;">Ereignis</div>
<div class="a" style="left:1400px;top:584px;width:13px;height:13px;border-radius:50%;border:1px solid #9396a8;background:radial-gradient(circle at 50% 50%,#fff 0,#fff 2.9px,#b4b7c6 3.9px,#e6e8ef 4.8px,#e2e4ec 5.5px)"></div>
<div class="t" style="left:1417px;top:584px;">Ganztägig</div>
<div class="a" style="left:1248px;top:608px;width:13px;height:13px;border-radius:50%;border:1px solid #9396a8;background:radial-gradient(circle at 50% 50%,#fff 0,#fff 2.9px,#b4b7c6 3.9px,#e6e8ef 4.8px,#e2e4ec 5.5px)"></div>
<div class="a" style="left:1251px;top:611px;width:7px;height:7px;border-radius:50%;background:radial-gradient(circle at 45% 40%,#a9c4f8 0,#4f78dc 45%,#2446b8 100%)"></div>
<div class="t" style="left:1265px;top:608px;">Zeitbereich</div>
<div class="a" style="left:1400px;top:608px;width:13px;height:13px;border-radius:50%;border:1px solid #9396a8;background:radial-gradient(circle at 50% 50%,#fff 0,#fff 2.9px,#b4b7c6 3.9px,#e6e8ef 4.8px,#e2e4ec 5.5px)"></div>
<div class="t" style="left:1417px;top:608px;">Wachbericht</div>
<div class="t" style="left:977px;top:641px;">Kategorie</div>
<div class="inp" style="left:1035px;top:637px;width:208px;height:22px"><span class="v">Wache1</span><i class="dd" style="right:5px;top:8px"></i></div>
<div class="t" style="left:1247px;top:641px;">Ort</div>
<div class="inp" style="left:1305px;top:637px;width:242px;height:22px"><span class="v">CHIO Abreiteplatz</span></div>
<div class="a" style="left:977px;top:663px;width:570px;height:90px;border:1px solid #b9bbc7;background:#fff"></div>
<div class="t" style="left:981px;top:665px;letter-spacing:-0.07px">2 verletzte Personen durch abwurf vom Pferd. Beide Personen mit RTW ins Klinikum verdacht</div>
<div class="t" style="left:981px;top:681px;letter-spacing:-0.07px">auf Becken bzw. HWS Fraktur.Bei der Bergung&nbsp; und Abtransport unterstützt.</div>
<div class="a" style="left:1529px;top:664px;width:17px;height:88px;background:#f3f3f6"></div>
<i class="up g" style="left:1534px;top:670px"></i><i class="dd g" style="left:1534px;top:742px"></i>
<div class="a" style="left:1255px;top:768px;width:1px;height:3px;background:#9a9cab"></div>
<div class="a" style="left:1257px;top:768px;width:1px;height:3px;background:#9a9cab"></div>
<div class="a" style="left:1259px;top:768px;width:1px;height:3px;background:#9a9cab"></div>
<div class="a" style="left:1261px;top:768px;width:1px;height:3px;background:#9a9cab"></div>
<div class="a" style="left:1263px;top:768px;width:1px;height:3px;background:#9a9cab"></div>
<div class="a" style="left:1265px;top:768px;width:1px;height:3px;background:#9a9cab"></div>
<div class="a" style="left:1267px;top:768px;width:1px;height:3px;background:#9a9cab"></div>
<div class="a" style="left:965px;top:799px;width:594px;height:45px;background:#fff;border:1px solid #a1a3b2;box-shadow:1px 1px 0 #c9cad3"></div>
<div class="a" style="left:968px;top:774px;width:80px;height:26px;background:#fff;border:1px solid #a9abb8;border-bottom:none"></div>
<svg class="a" style="left:982px;top:779px" width="10" height="16" viewBox="0 0 10 16"><path d="M1.5 5v6.6a3.2 3.2 0 0 0 6.4 0V3.7a2.2 2.2 0 0 0-4.4 0v7.6a1 1 0 0 0 2 0V5" fill="none" stroke="#4f525f" stroke-width="1"/></svg>
<div class="t" style="left:997px;top:780px;">Medien</div>
<svg class="a" style="left:1540px;top:780px" width="12" height="12" viewBox="0 0 12 12"><path d="M6 0v12M0 6h12" stroke="#2f9e3a" stroke-width="1.7"/></svg>
<div class="a" style="left:968px;top:802px;width:588px;height:32px;background:#e1e9fb"></div>
<svg class="a" style="left:975px;top:807px" width="20" height="20" viewBox="0 0 20 20"><rect x="2.6" y="1.6" width="14.6" height="17.2" rx=".6" fill="none" stroke="#4c4f5e" stroke-width="1.5"/><rect x="0" y="5" width="19.8" height="8.7" fill="#d9476a"/><text x="10" y="12.1" font-family="Liberation Sans,sans-serif" font-size="7.4" font-weight="bold" fill="#fff" text-anchor="middle" letter-spacing="-.2">IMG</text></svg>
<div class="t" style="left:1002px;top:811px;">Pferdesturz</div>
<div class="btn" style="left:965px;top:859px;width:145px;height:38px;"></div>
<svg class="a" style="left:972px;top:864px" width="26" height="28" viewBox="0 0 26 28"><path d="M6.8 12V8.2a6.2 6.2 0 0 1 12.4 0V12" fill="none" stroke="#f99b0c" stroke-width="4"/><rect x="1" y="10" width="24" height="18" fill="#f99b0c"/><circle cx="13" cy="16" r="2.1" fill="#e4e5ec"/><path d="M12.1 17h1.8l1.2 7h-4.2z" fill="#e4e5ec"/></svg>
<div class="t" style="left:1021px;top:871px;letter-spacing:-0.35px">Abschließen</div>
<div class="btn" style="left:1264px;top:858px;width:145px;height:38px;background:linear-gradient(#eef2fd,#d3defa 55%,#e6ecfc);border-color:#9da6c6"></div>
<svg class="a" style="left:1272px;top:865px" width="24" height="24" viewBox="0 0 24 24"><circle cx="12" cy="12" r="12" fill="#3faa49"/><path d="M5.5 12.5l4.2 4.2 8.8-9" fill="none" stroke="#fff" stroke-width="3.2"/></svg>
<div class="t" style="left:1317px;top:870px;letter-spacing:-0.27px">Übernehmen</div>
<div class="btn" style="left:1413px;top:858px;width:146px;height:38px;"></div>
<svg class="a" style="left:1421px;top:865px" width="24" height="24" viewBox="0 0 24 24"><circle cx="12" cy="12" r="12" fill="#e9415a"/><path d="M7 7l10 10M17 7L7 17" stroke="#f3e3e6" stroke-width="3.6"/></svg>
<div class="t" style="left:1473px;top:870px;letter-spacing:-0.25px">Abbrechen</div>
</body></html>
